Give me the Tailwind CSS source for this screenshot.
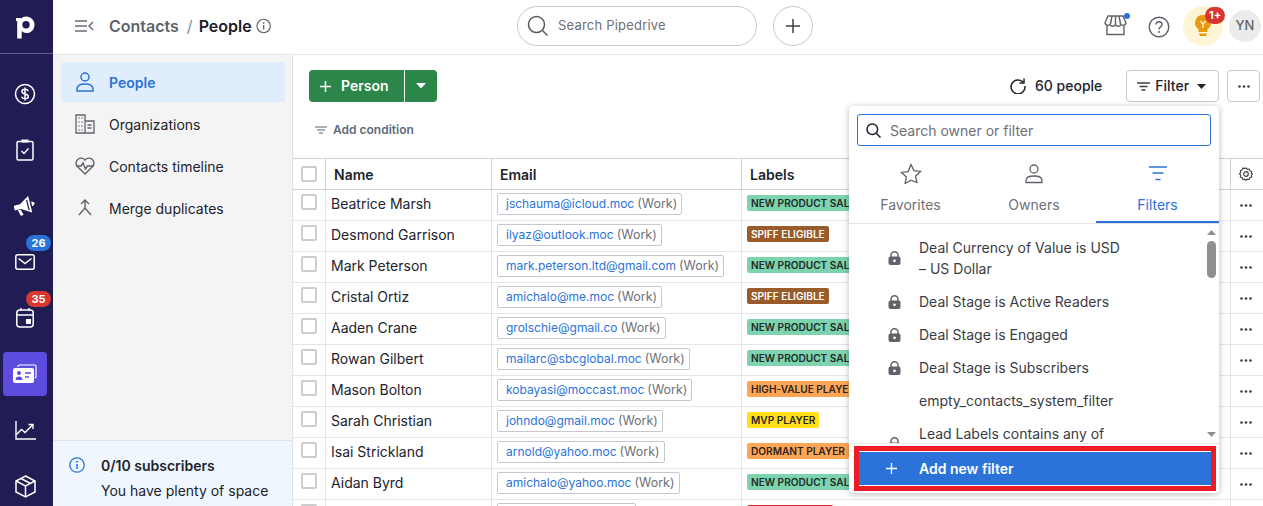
<!DOCTYPE html>
<html lang="en">
<head>
<meta charset="utf-8">
<title>Contacts / People</title>
<script src="https://cdn.jsdelivr.net/npm/@tailwindcss/browser@4"></script>
</head>
<body class="m-0 overflow-hidden bg-white">
<div class="relative flex h-[506px] w-[1263px] overflow-hidden font-['Inter','Noto_Sans',sans-serif] text-[14px] text-[#21232c]">

  <!-- Global nav -->
  <nav class="flex h-full w-[53px] shrink-0 flex-col bg-[#211c54] text-white">
    <div class="flex h-[54px] shrink-0 items-center justify-center border-b border-white/30 pr-[2px]">
      <svg width="20" height="28" viewBox="0 0 20 28" fill="none"><path d="M1 6.500h4.200v.8C6.300 5.900 8 5 10.200 5c4.800 0 8.300 3.700 8.300 8.200 0 4.700-3.500 8.300-8.100 8.300-2 0-3.600-.7-4.700-1.900v7.400H1.200V10.400c0-.6-.2-.8-.8-.8H0V6.500z" fill="#fff" transform="translate(0 -1.500)"/><circle cx="10" cy="11.800" r="3.700" fill="#211c54"/></svg>
    </div>
    <div class="flex shrink-0 flex-col pt-[12px]">
      <div class="flex h-[56px] shrink-0 items-center justify-center pr-[3px]">
        <svg width="22" height="22" viewBox="0 0 22 22" fill="none" stroke="#fff" stroke-width="1.500"><circle cx="11" cy="11" r="9.500"/><path d="M14.200 8c-.5-1.200-1.700-1.800-3.200-1.800-1.800 0-3.100.9-3.100 2.300 0 3.300 6.400 1.700 6.400 5 0 1.400-1.400 2.300-3.300 2.300-1.600 0-2.900-.7-3.400-2M11 4.500v13"/></svg>
      </div>
      <div class="flex h-[56px] shrink-0 items-center justify-center pr-[3px]">
        <svg width="18" height="22" viewBox="0 0 18 22" fill="none" stroke="#fff" stroke-width="1.500"><rect x="1" y="2.500" width="16" height="18.500" rx="1.500"/><path d="M5.500 12l2.500 2.500 4.500-5"/><rect x="5.500" y=".5" width="7" height="3" fill="#fff" stroke="none"/></svg>
      </div>
      <div class="flex h-[56px] shrink-0 items-center justify-center pr-[3px]">
        <svg width="22" height="20" viewBox="0 0 22 20" fill="#fff"><g transform="rotate(-14 11 10)"><path d="M0 7h6.500L16.500 1v17L6.500 12H0z"/><path d="M3 12.500l1.500 6h3L6 12.500z"/><path d="M18 7c1.800.5 3 1.500 3 2.500s-1.200 2-3 2.500z"/><path d="M14 4.500v10.500" stroke="#211c54" stroke-width="1.300"/></g></svg>
      </div>
      <div class="relative flex h-[56px] shrink-0 items-center justify-center pr-[3px]">
        <svg width="20" height="16" viewBox="0 0 20 16" fill="none" stroke="#fff" stroke-width="1.500"><rect x=".8" y=".8" width="18.400" height="14.400" rx="2"/><path d="M3.500 4.500l6.500 5 6.500-5"/></svg>
        <span class="absolute left-[26px] top-[1px] flex h-[16px] w-[25px] items-center justify-center rounded-full bg-[#2b73d8] text-[11px] font-bold text-white">26</span>
      </div>
      <div class="relative flex h-[56px] shrink-0 items-center justify-center pr-[3px]">
        <svg width="18" height="20" viewBox="0 0 18 20" fill="none" stroke="#fff" stroke-width="1.500"><rect x=".8" y="2" width="16.400" height="17" rx="3"/><path d="M1 7h16M5 0v3M13 0v3"/><rect x="10" y="11" width="5" height="5" fill="#fff" stroke="none"/></svg>
        <span class="absolute left-[26px] top-[1px] flex h-[16px] w-[25px] items-center justify-center rounded-full bg-[#d9362f] text-[11px] font-bold text-white">35</span>
      </div>
      <div class="flex h-[56px] shrink-0 items-center justify-center pr-[3px]">
        <div class="flex h-[44px] w-[44px] items-center justify-center rounded-[4px] bg-[#5c4ddf]">
          <svg width="24" height="20" viewBox="0 0 24 20" fill="none"><path d="M5 3V2.500A1.500 1.500 0 0 1 6.500 1h15A1.500 1.500 0 0 1 23 2.500v10a1.500 1.500 0 0 1-1.500 1.500" stroke="#fff" stroke-width="1.200"/><rect x="0" y="4" width="21" height="15" rx="2" fill="#fff"/><circle cx="6" cy="9" r="2" fill="#5c4ddf"/><path d="M2.500 16c0-2.500 1.500-3.500 3.500-3.500s3.500 1 3.500 3.500z" fill="#5c4ddf"/><path d="M12 9h6M12 13h4" stroke="#5c4ddf" stroke-width="1.500"/></svg>
        </div>
      </div>
      <div class="flex h-[56px] shrink-0 items-center justify-center pr-[3px]">
        <svg width="21" height="19" viewBox="0 0 21 19" fill="none" stroke="#fff" stroke-width="1.400"><path d="M1 0v18h20"/><path d="M1.500 13.500l5-5 3.500 3 7.500-7.500"/><path d="M13.500 3.500h4.500V8"/></svg>
      </div>
      <div class="flex h-[56px] shrink-0 items-center justify-center pr-[3px]">
        <svg width="21" height="23" viewBox="0 0 21 23" fill="none" stroke="#fff" stroke-width="1.500"><path d="M10.500 1L20 6v11l-9.500 5L1 17V6z"/><path d="M1 6l9.500 5L20 6M10.500 11v11M6 3.500l9.500 5"/></svg>
      </div>
    </div>
  </nav>

  <div class="flex min-w-0 flex-1 flex-col">
    <!-- Top bar -->
    <header class="relative flex h-[55px] shrink-0 items-center border-b border-[#e7e8ea] bg-white pb-[2px]">
      <div class="flex w-[41px] justify-end">
        <svg width="19" height="12" viewBox="0 0 19 12" fill="none" stroke="#6a6e75" stroke-width="1.500"><path d="M0 1h12M0 6h12M0 11h12M18 2l-4 4 4 4"/></svg>
      </div>
      <div class="ml-[15px] flex w-[162px] items-center text-[16px] font-semibold">
        <span class="text-[#5f6369]">Contacts</span>
        <span class="ml-[8px] mr-[6px] font-normal text-[#8a8d92]">/</span>
        <span class="text-[#1e2029]">People</span>
        <svg class="ml-[4px]" width="16" height="16" viewBox="0 0 16 16" fill="none" stroke="#5f6369" stroke-width="1.200"><circle cx="8" cy="8" r="7"/><path d="M8 7v4.500" stroke-width="1.400"/><circle cx="8" cy="4.700" r=".9" fill="#5f6369" stroke="none"/></svg>
      </div>
      <div class="ml-[246px] flex h-[40px] w-[240px] items-center rounded-full border border-[#c6c8cc] pl-[9px]">
        <svg width="22" height="22" viewBox="0 0 22 22" fill="none" stroke="#54575d" stroke-width="1.500"><circle cx="9.500" cy="9.500" r="8"/><path d="M15.500 15.500l5 5"/></svg>
        <span class="ml-[9px] text-[13px] tracking-[.2px] text-[#6d7178]">Search Pipedrive</span>
      </div>
      <div class="ml-[16px] flex h-[40px] w-[40px] items-center justify-center rounded-full border border-[#c6c8cc]">
        <svg width="16" height="16" viewBox="0 0 16 16" stroke="#3c3f46" stroke-width="1.500"><path d="M8 1v14M1 8h14"/></svg>
      </div>
      <div class="absolute left-[1051px] top-[15px]">
        <svg width="23" height="21" viewBox="0 0 23 21" fill="none" stroke="#5f6369" stroke-width="1.400"><path d="M4 1h15l3 7a3 3 0 0 1-5 1.500 3 3 0 0 1-5.500 0 3 3 0 0 1-5.500 0A3 3 0 0 1 1 8z"/><path d="M8 1L6.500 9M11.500 1v8M15 1l1.500 8"/><path d="M3 11v8.500h17V11"/></svg>
        <span class="absolute left-[20px] top-[-2px] h-[6px] w-[6px] rounded-full bg-[#2b73d8]"></span>
      </div>
      <div class="absolute left-[1095px] top-[16px]">
        <svg width="22" height="22" viewBox="0 0 22 22" fill="none" stroke="#5f6369" stroke-width="1.400"><circle cx="11" cy="11" r="9.800"/><path d="M8 8.500C8 6.800 9.300 5.700 11 5.700s3 1.100 3 2.700c0 2.500-3 2.500-3 5"/><circle cx="11" cy="16" r="1" fill="#5f6369" stroke="none"/></svg>
      </div>
      <div class="absolute left-[1130px] top-[6px] flex h-[40px] w-[40px] items-center justify-center rounded-full bg-[#fff5d6]">
        <svg width="16" height="22" viewBox="0 0 16 22" fill="#e89a0c"><path d="M8 0a7.800 7.800 0 0 0-4.500 14.200V17h9v-2.800A7.800 7.800 0 0 0 8 0z"/><path d="M4 18.500h8l-1 2.500H5z"/><path d="M5.500 6L8 9.500 10.500 6M8 9.500V13" stroke="#fff5d6" stroke-width="1.300" fill="none"/></svg>
        <span class="absolute left-[22px] top-[1px] flex h-[17px] w-[20px] items-center justify-center rounded-full bg-[#d9362f] text-[11px] font-bold text-white">1+</span>
      </div>
      <div class="absolute left-[1176px] top-[10px] flex h-[32px] w-[32px] items-center justify-center rounded-full bg-[#ebebeb] text-[13px] font-medium text-[#5f6369]">YN</div>
    </header>

    <div class="flex min-h-0 flex-1">
      <!-- Sidebar -->
      <aside class="flex h-full w-[240px] shrink-0 flex-col border-r border-[#e0e2e5] bg-[#f4f4f4]">
        <div class="flex flex-1 flex-col gap-[2px] pl-[8px] pr-[7px] pt-[7px]">
          <div class="flex h-[40px] items-center rounded-[4px] bg-[#e0edfc] pl-[15px] font-semibold text-[#2b73d8]">
            <svg width="18" height="20" viewBox="0 0 18 20" fill="none" stroke="#2b73d8" stroke-width="1.500"><circle cx="9" cy="5" r="4"/><path d="M1 19v-2c0-3 3-5 8-5s8 2 8 5v2z"/></svg>
            <span class="ml-[15px]">People</span>
          </div>
          <div class="flex h-[40px] items-center pl-[14px]">
            <svg width="20" height="20" viewBox="0 0 20 20" fill="none" stroke="#5f6369" stroke-width="1.300"><path d="M1 1h9v18H1zM10 7h9v12h-9z"/><path d="M3.500 4h1M6.500 4h1M3.500 8h1M6.500 8h1M3.500 12h1M6.500 12h1M3.500 16h1M6.500 16h1M12.500 11h4M12.500 14h4" stroke-width="1.500"/></svg>
            <span class="ml-[14px]">Organizations</span>
          </div>
          <div class="flex h-[40px] items-center pl-[14px]">
            <svg width="20" height="18" viewBox="0 0 20 18" fill="none" stroke="#5f6369" stroke-width="1.400"><path d="M10 17L2.200 9.300A5 5 0 0 1 10 3a5 5 0 0 1 7.800 6.300z"/><path d="M1 9h5l2-3 2.500 6 2-3h6"/></svg>
            <span class="ml-[14px]">Contacts timeline</span>
          </div>
          <div class="flex h-[40px] items-center pl-[17px]">
            <svg width="14" height="18" viewBox="0 0 14 18" fill="none" stroke="#5f6369" stroke-width="1.400"><path d="M3 5l4-4 4 4M7 1v8L1 16M7 9l6 7"/></svg>
            <span class="ml-[17px]">Merge duplicates</span>
          </div>
        </div>
        <div class="flex h-[66px] shrink-0 border-t border-[#e0e4e8] bg-[#eff6fe] pl-[16px] pt-[16px]">
          <svg width="16" height="16" viewBox="0 0 16 16" fill="none" stroke="#2b73d8" stroke-width="1.300"><circle cx="8" cy="8" r="7.200"/><path d="M8 7v5" stroke-width="1.500"/><circle cx="8" cy="4.700" r="1" fill="#2b73d8" stroke="none"/></svg>
          <div class="ml-[16px] mt-[-1px]">
            <div class="font-semibold leading-[20px]">0/10 subscribers</div>
            <div class="mt-[5px] leading-[20px]">You have plenty of space</div>
          </div>
        </div>
      </aside>

      <!-- Main -->
      <main class="flex min-w-0 flex-1 flex-col">
        <div class="flex h-[103px] shrink-0 flex-col pl-[16px] pt-[15px]">
          <div class="flex items-center">
            <div class="flex h-[32px] w-[128px] rounded-[4px] bg-[#2c8549] font-semibold text-white">
              <div class="flex w-[96px] items-center border-r border-white pl-[11px]">
                <svg width="11" height="11" viewBox="0 0 11 11" stroke="#fff" stroke-width="1.500"><path d="M5.500 0v11M0 5.500h11"/></svg>
                <span class="ml-[10px] mt-[-1px]">Person</span>
              </div>
              <div class="flex flex-1 items-center justify-center">
                <svg width="10" height="6" viewBox="0 0 10 6" fill="#fff"><path d="M0 0h10L5 5.500z"/></svg>
              </div>
            </div>
            <div class="ml-[573px] flex items-center font-medium">
              <svg width="16" height="16" viewBox="0 0 16 16" fill="none" stroke="#21232c" stroke-width="1.500"><path d="M13.500 4.500A7 7 0 1 0 15 8"/><path d="M14 .5v4.500H9.500" stroke-width="1.500"/></svg>
              <span class="ml-[9px] mt-[-1px]">60 people</span>
            </div>
            <div class="ml-[24px] flex h-[32px] w-[93px] items-center rounded-[4px] border border-[#c6c8cc] pl-[10px] font-medium">
              <svg width="13" height="9" viewBox="0 0 13 9" stroke="#3c3f46" stroke-width="1.300"><path d="M0 1h13M2.500 4.500h8M4.500 8h4"/></svg>
              <span class="ml-[5px] mt-[-1px]">Filter</span>
              <svg class="ml-[8px]" width="9" height="5" viewBox="0 0 9 5" fill="#21232c"><path d="M0 0h9L4.500 5z"/></svg>
            </div>
            <div class="ml-[8px] flex h-[32px] w-[33px] items-center justify-center rounded-[4px] border border-[#c6c8cc]">
              <svg width="12" height="3" viewBox="0 0 12 3" fill="#3c3f46"><circle cx="1.500" cy="1.500" r="1.300"/><circle cx="6" cy="1.500" r="1.300"/><circle cx="10.500" cy="1.500" r="1.300"/></svg>
            </div>
          </div>
          <div class="ml-[6px] mt-[20px] flex items-center text-[12px] font-semibold leading-[16px] text-[#5e6a7e]">
            <svg width="12" height="8" viewBox="0 0 12 8" stroke="#5f6369" stroke-width="1.200"><path d="M0 1h12M2 4h8M4 7h4"/></svg>
            <span class="ml-[6px]">Add condition</span>
          </div>
        </div>

        <!-- Table -->
        <div class="flex h-[32px] shrink-0 border-y border-[#cfd0d2] font-semibold">
          <div class="flex w-[33px] shrink-0 items-center border-r border-[#cfd0d2] pb-[1px] pl-[8px]"><span class="block h-[16px] w-[16px] rounded-[2px] border-2 border-[#cdcdcd]"></span></div>
          <div class="flex w-[166px] shrink-0 items-center border-r border-[#cfd0d2] pl-[8px]">Name</div>
          <div class="flex w-[250px] shrink-0 items-center border-r border-[#cfd0d2] pl-[8px]">Email</div>
          <div class="flex w-[489px] shrink-0 items-center border-r border-[#cfd0d2] pl-[8px]">Labels</div>
          <div class="flex flex-1 items-center justify-center pr-[2px]">
            <svg width="14" height="14" viewBox="0 0 14 14" fill="none" stroke="#3c3f46" stroke-width="1.200"><path d="M7 .7l1.400 1.500 2-.3.8 1.900 1.900.8-.3 2L14 7l-1.200 1.400.3 2-1.900.8-.8 1.900-2-.3L7 14l-1.400-1.200-2 .3-.8-1.900-1.900-.8.3-2L0 7l1.200-1.400-.3-2 1.900-.8.8-1.900 2 .3z" transform="translate(.5 .3) scale(.93)"/><circle cx="7" cy="7" r="2.300"/></svg>
          </div>
        </div>

        <div class="flex h-[31px] shrink-0 border-b border-[#e5e5e5]">
          <div class="w-[33px] shrink-0 border-r border-[#e5e5e5] pl-[8px] pt-[4px]"><span class="block h-[16px] w-[16px] rounded-[2px] border-2 border-[#cdcdcd]"></span></div>
          <div class="flex w-[166px] shrink-0 items-center border-r border-[#e5e5e5] pb-[4px] pl-[5px]">Beatrice Marsh</div>
          <div class="flex w-[250px] shrink-0 items-center border-r border-[#e5e5e5] pb-[2px] pl-[5px]"><span class="flex h-[22px] items-center rounded-[2px] border border-[#c6c8cc] pl-[8px] pr-[4px] text-[12px]"><span class="text-[#2b73d8]">jschauma@icloud.moc</span><span class="ml-[3px] text-[12.500px] text-[#6d7178]">(Work)</span></span></div>
          <div class="flex w-[489px] shrink-0 items-center border-r border-[#e5e5e5] pb-[4px] pl-[5px]"><span class="whitespace-nowrap rounded-[2px] bg-[#7dd3ae] px-[4px] text-[10.100px] font-semibold leading-[16px] text-[#1d2a27]">NEW PRODUCT SALES</span></div>
          <div class="flex flex-1 items-center justify-center pr-[2px]"><svg width="12" height="3" viewBox="0 0 12 3" fill="#3c3f46"><circle cx="1.500" cy="1.500" r="1.300"/><circle cx="6" cy="1.500" r="1.300"/><circle cx="10.500" cy="1.500" r="1.300"/></svg></div>
        </div>
        <div class="flex h-[31px] shrink-0 border-b border-[#e5e5e5]">
          <div class="w-[33px] shrink-0 border-r border-[#e5e5e5] pl-[8px] pt-[4px]"><span class="block h-[16px] w-[16px] rounded-[2px] border-2 border-[#cdcdcd]"></span></div>
          <div class="flex w-[166px] shrink-0 items-center border-r border-[#e5e5e5] pb-[4px] pl-[5px]">Desmond Garrison</div>
          <div class="flex w-[250px] shrink-0 items-center border-r border-[#e5e5e5] pb-[2px] pl-[5px]"><span class="flex h-[22px] items-center rounded-[2px] border border-[#c6c8cc] pl-[8px] pr-[4px] text-[12px]"><span class="text-[#2b73d8]">ilyaz@outlook.moc</span><span class="ml-[3px] text-[12.500px] text-[#6d7178]">(Work)</span></span></div>
          <div class="flex w-[489px] shrink-0 items-center border-r border-[#e5e5e5] pb-[4px] pl-[5px]"><span class="whitespace-nowrap rounded-[2px] bg-[#9a5b2b] px-[4px] text-[10.100px] font-semibold leading-[16px] text-white">SPIFF ELIGIBLE</span></div>
          <div class="flex flex-1 items-center justify-center pr-[2px]"><svg width="12" height="3" viewBox="0 0 12 3" fill="#3c3f46"><circle cx="1.500" cy="1.500" r="1.300"/><circle cx="6" cy="1.500" r="1.300"/><circle cx="10.500" cy="1.500" r="1.300"/></svg></div>
        </div>
        <div class="flex h-[31px] shrink-0 border-b border-[#e5e5e5]">
          <div class="w-[33px] shrink-0 border-r border-[#e5e5e5] pl-[8px] pt-[4px]"><span class="block h-[16px] w-[16px] rounded-[2px] border-2 border-[#cdcdcd]"></span></div>
          <div class="flex w-[166px] shrink-0 items-center border-r border-[#e5e5e5] pb-[4px] pl-[5px]">Mark Peterson</div>
          <div class="flex w-[250px] shrink-0 items-center border-r border-[#e5e5e5] pb-[2px] pl-[5px]"><span class="flex h-[22px] items-center rounded-[2px] border border-[#c6c8cc] pl-[8px] pr-[4px] text-[12px]"><span class="text-[#2b73d8]">mark.peterson.ltd@gmail.com</span><span class="ml-[3px] text-[12.500px] text-[#6d7178]">(Work)</span></span></div>
          <div class="flex w-[489px] shrink-0 items-center border-r border-[#e5e5e5] pb-[4px] pl-[5px]"><span class="whitespace-nowrap rounded-[2px] bg-[#7dd3ae] px-[4px] text-[10.100px] font-semibold leading-[16px] text-[#1d2a27]">NEW PRODUCT SALES</span></div>
          <div class="flex flex-1 items-center justify-center pr-[2px]"><svg width="12" height="3" viewBox="0 0 12 3" fill="#3c3f46"><circle cx="1.500" cy="1.500" r="1.300"/><circle cx="6" cy="1.500" r="1.300"/><circle cx="10.500" cy="1.500" r="1.300"/></svg></div>
        </div>
        <div class="flex h-[31px] shrink-0 border-b border-[#e5e5e5]">
          <div class="w-[33px] shrink-0 border-r border-[#e5e5e5] pl-[8px] pt-[4px]"><span class="block h-[16px] w-[16px] rounded-[2px] border-2 border-[#cdcdcd]"></span></div>
          <div class="flex w-[166px] shrink-0 items-center border-r border-[#e5e5e5] pb-[4px] pl-[5px]">Cristal Ortiz</div>
          <div class="flex w-[250px] shrink-0 items-center border-r border-[#e5e5e5] pb-[2px] pl-[5px]"><span class="flex h-[22px] items-center rounded-[2px] border border-[#c6c8cc] pl-[8px] pr-[4px] text-[12px]"><span class="text-[#2b73d8]">amichalo@me.moc</span><span class="ml-[3px] text-[12.500px] text-[#6d7178]">(Work)</span></span></div>
          <div class="flex w-[489px] shrink-0 items-center border-r border-[#e5e5e5] pb-[4px] pl-[5px]"><span class="whitespace-nowrap rounded-[2px] bg-[#9a5b2b] px-[4px] text-[10.100px] font-semibold leading-[16px] text-white">SPIFF ELIGIBLE</span></div>
          <div class="flex flex-1 items-center justify-center pr-[2px]"><svg width="12" height="3" viewBox="0 0 12 3" fill="#3c3f46"><circle cx="1.500" cy="1.500" r="1.300"/><circle cx="6" cy="1.500" r="1.300"/><circle cx="10.500" cy="1.500" r="1.300"/></svg></div>
        </div>
        <div class="flex h-[31px] shrink-0 border-b border-[#e5e5e5]">
          <div class="w-[33px] shrink-0 border-r border-[#e5e5e5] pl-[8px] pt-[4px]"><span class="block h-[16px] w-[16px] rounded-[2px] border-2 border-[#cdcdcd]"></span></div>
          <div class="flex w-[166px] shrink-0 items-center border-r border-[#e5e5e5] pb-[4px] pl-[5px]">Aaden Crane</div>
          <div class="flex w-[250px] shrink-0 items-center border-r border-[#e5e5e5] pb-[2px] pl-[5px]"><span class="flex h-[22px] items-center rounded-[2px] border border-[#c6c8cc] pl-[8px] pr-[4px] text-[12px]"><span class="text-[#2b73d8]">grolschie@gmail.co</span><span class="ml-[3px] text-[12.500px] text-[#6d7178]">(Work)</span></span></div>
          <div class="flex w-[489px] shrink-0 items-center border-r border-[#e5e5e5] pb-[4px] pl-[5px]"><span class="whitespace-nowrap rounded-[2px] bg-[#7dd3ae] px-[4px] text-[10.100px] font-semibold leading-[16px] text-[#1d2a27]">NEW PRODUCT SALES</span></div>
          <div class="flex flex-1 items-center justify-center pr-[2px]"><svg width="12" height="3" viewBox="0 0 12 3" fill="#3c3f46"><circle cx="1.500" cy="1.500" r="1.300"/><circle cx="6" cy="1.500" r="1.300"/><circle cx="10.500" cy="1.500" r="1.300"/></svg></div>
        </div>
        <div class="flex h-[31px] shrink-0 border-b border-[#e5e5e5]">
          <div class="w-[33px] shrink-0 border-r border-[#e5e5e5] pl-[8px] pt-[4px]"><span class="block h-[16px] w-[16px] rounded-[2px] border-2 border-[#cdcdcd]"></span></div>
          <div class="flex w-[166px] shrink-0 items-center border-r border-[#e5e5e5] pb-[4px] pl-[5px]">Rowan Gilbert</div>
          <div class="flex w-[250px] shrink-0 items-center border-r border-[#e5e5e5] pb-[2px] pl-[5px]"><span class="flex h-[22px] items-center rounded-[2px] border border-[#c6c8cc] pl-[8px] pr-[4px] text-[12px]"><span class="text-[#2b73d8]">mailarc@sbcglobal.moc</span><span class="ml-[3px] text-[12.500px] text-[#6d7178]">(Work)</span></span></div>
          <div class="flex w-[489px] shrink-0 items-center border-r border-[#e5e5e5] pb-[4px] pl-[5px]"><span class="whitespace-nowrap rounded-[2px] bg-[#7dd3ae] px-[4px] text-[10.100px] font-semibold leading-[16px] text-[#1d2a27]">NEW PRODUCT SALES</span></div>
          <div class="flex flex-1 items-center justify-center pr-[2px]"><svg width="12" height="3" viewBox="0 0 12 3" fill="#3c3f46"><circle cx="1.500" cy="1.500" r="1.300"/><circle cx="6" cy="1.500" r="1.300"/><circle cx="10.500" cy="1.500" r="1.300"/></svg></div>
        </div>
        <div class="flex h-[31px] shrink-0 border-b border-[#e5e5e5]">
          <div class="w-[33px] shrink-0 border-r border-[#e5e5e5] pl-[8px] pt-[4px]"><span class="block h-[16px] w-[16px] rounded-[2px] border-2 border-[#cdcdcd]"></span></div>
          <div class="flex w-[166px] shrink-0 items-center border-r border-[#e5e5e5] pb-[4px] pl-[5px]">Mason Bolton</div>
          <div class="flex w-[250px] shrink-0 items-center border-r border-[#e5e5e5] pb-[2px] pl-[5px]"><span class="flex h-[22px] items-center rounded-[2px] border border-[#c6c8cc] pl-[8px] pr-[4px] text-[12px]"><span class="text-[#2b73d8]">kobayasi@moccast.moc</span><span class="ml-[3px] text-[12.500px] text-[#6d7178]">(Work)</span></span></div>
          <div class="flex w-[489px] shrink-0 items-center border-r border-[#e5e5e5] pb-[4px] pl-[5px]"><span class="whitespace-nowrap rounded-[2px] bg-[#ffa656] px-[4px] text-[10.100px] font-semibold leading-[16px] text-[#2a2420]">HIGH-VALUE PLAYER</span></div>
          <div class="flex flex-1 items-center justify-center pr-[2px]"><svg width="12" height="3" viewBox="0 0 12 3" fill="#3c3f46"><circle cx="1.500" cy="1.500" r="1.300"/><circle cx="6" cy="1.500" r="1.300"/><circle cx="10.500" cy="1.500" r="1.300"/></svg></div>
        </div>
        <div class="flex h-[31px] shrink-0 border-b border-[#e5e5e5]">
          <div class="w-[33px] shrink-0 border-r border-[#e5e5e5] pl-[8px] pt-[4px]"><span class="block h-[16px] w-[16px] rounded-[2px] border-2 border-[#cdcdcd]"></span></div>
          <div class="flex w-[166px] shrink-0 items-center border-r border-[#e5e5e5] pb-[4px] pl-[5px]">Sarah Christian</div>
          <div class="flex w-[250px] shrink-0 items-center border-r border-[#e5e5e5] pb-[2px] pl-[5px]"><span class="flex h-[22px] items-center rounded-[2px] border border-[#c6c8cc] pl-[8px] pr-[4px] text-[12px]"><span class="text-[#2b73d8]">johndo@gmail.moc</span><span class="ml-[3px] text-[12.500px] text-[#6d7178]">(Work)</span></span></div>
          <div class="flex w-[489px] shrink-0 items-center border-r border-[#e5e5e5] pb-[4px] pl-[5px]"><span class="whitespace-nowrap rounded-[2px] bg-[#ffe01b] px-[4px] text-[10.100px] font-semibold leading-[16px] text-[#2a2420]">MVP PLAYER</span></div>
          <div class="flex flex-1 items-center justify-center pr-[2px]"><svg width="12" height="3" viewBox="0 0 12 3" fill="#3c3f46"><circle cx="1.500" cy="1.500" r="1.300"/><circle cx="6" cy="1.500" r="1.300"/><circle cx="10.500" cy="1.500" r="1.300"/></svg></div>
        </div>
        <div class="flex h-[31px] shrink-0 border-b border-[#e5e5e5]">
          <div class="w-[33px] shrink-0 border-r border-[#e5e5e5] pl-[8px] pt-[4px]"><span class="block h-[16px] w-[16px] rounded-[2px] border-2 border-[#cdcdcd]"></span></div>
          <div class="flex w-[166px] shrink-0 items-center border-r border-[#e5e5e5] pb-[4px] pl-[5px]">Isai Strickland</div>
          <div class="flex w-[250px] shrink-0 items-center border-r border-[#e5e5e5] pb-[2px] pl-[5px]"><span class="flex h-[22px] items-center rounded-[2px] border border-[#c6c8cc] pl-[8px] pr-[4px] text-[12px]"><span class="text-[#2b73d8]">arnold@yahoo.moc</span><span class="ml-[3px] text-[12.500px] text-[#6d7178]">(Work)</span></span></div>
          <div class="flex w-[489px] shrink-0 items-center border-r border-[#e5e5e5] pb-[4px] pl-[5px]"><span class="whitespace-nowrap rounded-[2px] bg-[#ffa656] px-[4px] text-[10.100px] font-semibold leading-[16px] text-[#2a2420]">DORMANT PLAYER</span></div>
          <div class="flex flex-1 items-center justify-center pr-[2px]"><svg width="12" height="3" viewBox="0 0 12 3" fill="#3c3f46"><circle cx="1.500" cy="1.500" r="1.300"/><circle cx="6" cy="1.500" r="1.300"/><circle cx="10.500" cy="1.500" r="1.300"/></svg></div>
        </div>
        <div class="flex h-[31px] shrink-0 border-b border-[#e5e5e5]">
          <div class="w-[33px] shrink-0 border-r border-[#e5e5e5] pl-[8px] pt-[4px]"><span class="block h-[16px] w-[16px] rounded-[2px] border-2 border-[#cdcdcd]"></span></div>
          <div class="flex w-[166px] shrink-0 items-center border-r border-[#e5e5e5] pb-[4px] pl-[5px]">Aidan Byrd</div>
          <div class="flex w-[250px] shrink-0 items-center border-r border-[#e5e5e5] pb-[2px] pl-[5px]"><span class="flex h-[22px] items-center rounded-[2px] border border-[#c6c8cc] pl-[8px] pr-[4px] text-[12px]"><span class="text-[#2b73d8]">amichalo@yahoo.moc</span><span class="ml-[3px] text-[12.500px] text-[#6d7178]">(Work)</span></span></div>
          <div class="flex w-[489px] shrink-0 items-center border-r border-[#e5e5e5] pb-[4px] pl-[5px]"><span class="whitespace-nowrap rounded-[2px] bg-[#7dd3ae] px-[4px] text-[10.100px] font-semibold leading-[16px] text-[#1d2a27]">NEW PRODUCT SALES</span></div>
          <div class="flex flex-1 items-center justify-center pr-[2px]"><svg width="12" height="3" viewBox="0 0 12 3" fill="#3c3f46"><circle cx="1.500" cy="1.500" r="1.300"/><circle cx="6" cy="1.500" r="1.300"/><circle cx="10.500" cy="1.500" r="1.300"/></svg></div>
        </div>
        <div class="flex h-[31px] shrink-0">
          <div class="w-[33px] shrink-0 border-r border-[#e5e5e5] pl-[8px] pt-[4px]"><span class="block h-[16px] w-[16px] rounded-[2px] border-2 border-[#cdcdcd]"></span></div>
          <div class="w-[166px] shrink-0 border-r border-[#e5e5e5]"></div>
          <div class="w-[250px] shrink-0 border-r border-[#e5e5e5] pl-[5px] pt-[3px]"><span class="block h-[22px] w-[139px] rounded-[2px] border border-[#c6c8cc]"></span></div>
          <div class="w-[489px] shrink-0 border-r border-[#e5e5e5] pl-[5px] pt-[5px]"><span class="block h-[16px] w-[86px] rounded-[2px] bg-[#e0302f]"></span></div>
        </div>
      </main>
    </div>
  </div>

  <!-- Filter popover -->
  <div class="absolute left-[849px] top-[106px] flex h-[387px] w-[370px] flex-col overflow-hidden rounded-[4px] bg-white shadow-[0_1px_6px_rgba(0,0,0,.28)]">
    <div class="mx-[8px] mt-[8px] flex h-[32px] shrink-0 items-center rounded-[3px] border border-[#2b73d8] pl-[8px]">
      <svg width="15" height="15" viewBox="0 0 15 15" fill="none" stroke="#21232c" stroke-width="1.500"><circle cx="6.300" cy="6.300" r="5.300"/><path d="M10.200 10.200l4.300 4.300"/></svg>
      <span class="ml-[9px] text-[#6d7178]">Search owner or filter</span>
    </div>
    <div class="flex h-[78px] shrink-0 border-b border-[#e3e3e3] pt-[17px] text-[#6d7178]">
      <div class="flex w-[123px] flex-col items-center">
        <svg width="22" height="21" viewBox="0 0 22 21" fill="none" stroke="#5f6369" stroke-width="1.300"><path d="M11 1.500l2.900 6.100 6.600.8-4.900 4.500 1.300 6.600L11 17.200l-5.900 3.300 1.300-6.600L1.500 9.400l6.600-.8z"/></svg>
        <span class="mt-[11px] leading-[20px]">Favorites</span>
      </div>
      <div class="flex w-[124px] flex-col items-center">
        <svg width="18" height="21" viewBox="0 0 18 21" fill="none" stroke="#5f6369" stroke-width="1.300"><circle cx="9" cy="6" r="4"/><path d="M1 19.500v-2c0-3 3-4.500 8-4.500s8 1.500 8 4.500v2z"/></svg>
        <span class="mt-[11px] leading-[20px]">Owners</span>
      </div>
      <div class="relative flex flex-1 flex-col items-center text-[#2b73d8]">
        <svg class="mt-[3px]" width="18" height="15" viewBox="0 0 18 15" stroke="#2b73d8" stroke-width="1.500"><path d="M0 1h18M3.500 7h11M6.500 13.500h5"/></svg>
        <span class="mt-[14px] leading-[20px]">Filters</span>
        <span class="absolute bottom-0 left-0 right-0 h-[2px] bg-[#2b73d8]"></span>
      </div>
    </div>
    <div class="relative min-h-0 flex-1 overflow-hidden text-[#3a3c43]">
      <div class="flex flex-col pl-[39px] pt-[13px] leading-[21px]">
        <div class="flex h-[42px] items-center">
          <svg class="shrink-0" width="13" height="14" viewBox="0 0 13 14" fill="#5f6369"><path d="M3 6V4.300a3.500 3.500 0 0 1 7 0V6" fill="none" stroke="#5f6369" stroke-width="1.500"/><rect x=".5" y="5.500" width="12" height="8.500" rx="2"/><circle cx="6.500" cy="9.800" r="1.400" fill="#fff"/></svg>
          <span class="ml-[18px] w-[210px]">Deal Currency of Value is USD – US Dollar</span>
        </div>
        <div class="mt-[12px] flex h-[21px] items-center">
          <svg class="shrink-0" width="13" height="14" viewBox="0 0 13 14" fill="#5f6369"><path d="M3 6V4.300a3.500 3.500 0 0 1 7 0V6" fill="none" stroke="#5f6369" stroke-width="1.500"/><rect x=".5" y="5.500" width="12" height="8.500" rx="2"/><circle cx="6.500" cy="9.800" r="1.400" fill="#fff"/></svg>
          <span class="ml-[18px]">Deal Stage is Active Readers</span>
        </div>
        <div class="mt-[12px] flex h-[21px] items-center">
          <svg class="shrink-0" width="13" height="14" viewBox="0 0 13 14" fill="#5f6369"><path d="M3 6V4.300a3.500 3.500 0 0 1 7 0V6" fill="none" stroke="#5f6369" stroke-width="1.500"/><rect x=".5" y="5.500" width="12" height="8.500" rx="2"/><circle cx="6.500" cy="9.800" r="1.400" fill="#fff"/></svg>
          <span class="ml-[18px]">Deal Stage is Engaged</span>
        </div>
        <div class="mt-[12px] flex h-[21px] items-center">
          <svg class="shrink-0" width="13" height="14" viewBox="0 0 13 14" fill="#5f6369"><path d="M3 6V4.300a3.500 3.500 0 0 1 7 0V6" fill="none" stroke="#5f6369" stroke-width="1.500"/><rect x=".5" y="5.500" width="12" height="8.500" rx="2"/><circle cx="6.500" cy="9.800" r="1.400" fill="#fff"/></svg>
          <span class="ml-[18px]">Deal Stage is Subscribers</span>
        </div>
        <div class="mt-[12px] h-[21px] pl-[31px]">empty_contacts_system_filter</div>
        <div class="mt-[12px] flex h-[21px] items-start">
          <svg class="mt-[14px] shrink-0" width="13" height="14" viewBox="0 0 13 14" fill="#5f6369"><path d="M3 6V4.300a3.500 3.500 0 0 1 7 0V6" fill="none" stroke="#5f6369" stroke-width="1.500"/><rect x=".5" y="5.500" width="12" height="8.500" rx="2"/><circle cx="6.500" cy="9.800" r="1.400" fill="#fff"/></svg>
          <span class="ml-[18px]">Lead Labels contains any of</span>
        </div>
      </div>
      <div class="absolute bottom-0 right-[3px] top-0 flex w-[9px] flex-col items-center justify-between pb-[6px] pt-[6px]">
        <svg width="9" height="5" viewBox="0 0 9 5" fill="#8f8f8f"><path d="M4.500 0L9 5H0z"/></svg>
        <span class="absolute left-0 top-[17px] h-[37px] w-[9px] rounded-full bg-[#8f8f8f]"></span>
        <svg width="9" height="5" viewBox="0 0 9 5" fill="#8f8f8f"><path d="M0 0h9L4.500 5z"/></svg>
      </div>
    </div>
    <div class="shrink-0 border-t border-[#e3e3e3] pb-[2px] pl-[5px] pr-[3px] pt-[2px]">
      <div class="h-[45px] border-[5px] border-[#ed1c24]">
        <div class="flex h-full items-center border-y border-white bg-[#2b73d8] pl-[27px] font-semibold text-white">
          <svg width="11" height="11" viewBox="0 0 11 11" stroke="#fff" stroke-width="1.400"><path d="M5.500 0v11M0 5.500h11"/></svg>
          <span class="ml-[22px]">Add new filter</span>
        </div>
      </div>
    </div>
  </div>
</div>
</body>
</html>
